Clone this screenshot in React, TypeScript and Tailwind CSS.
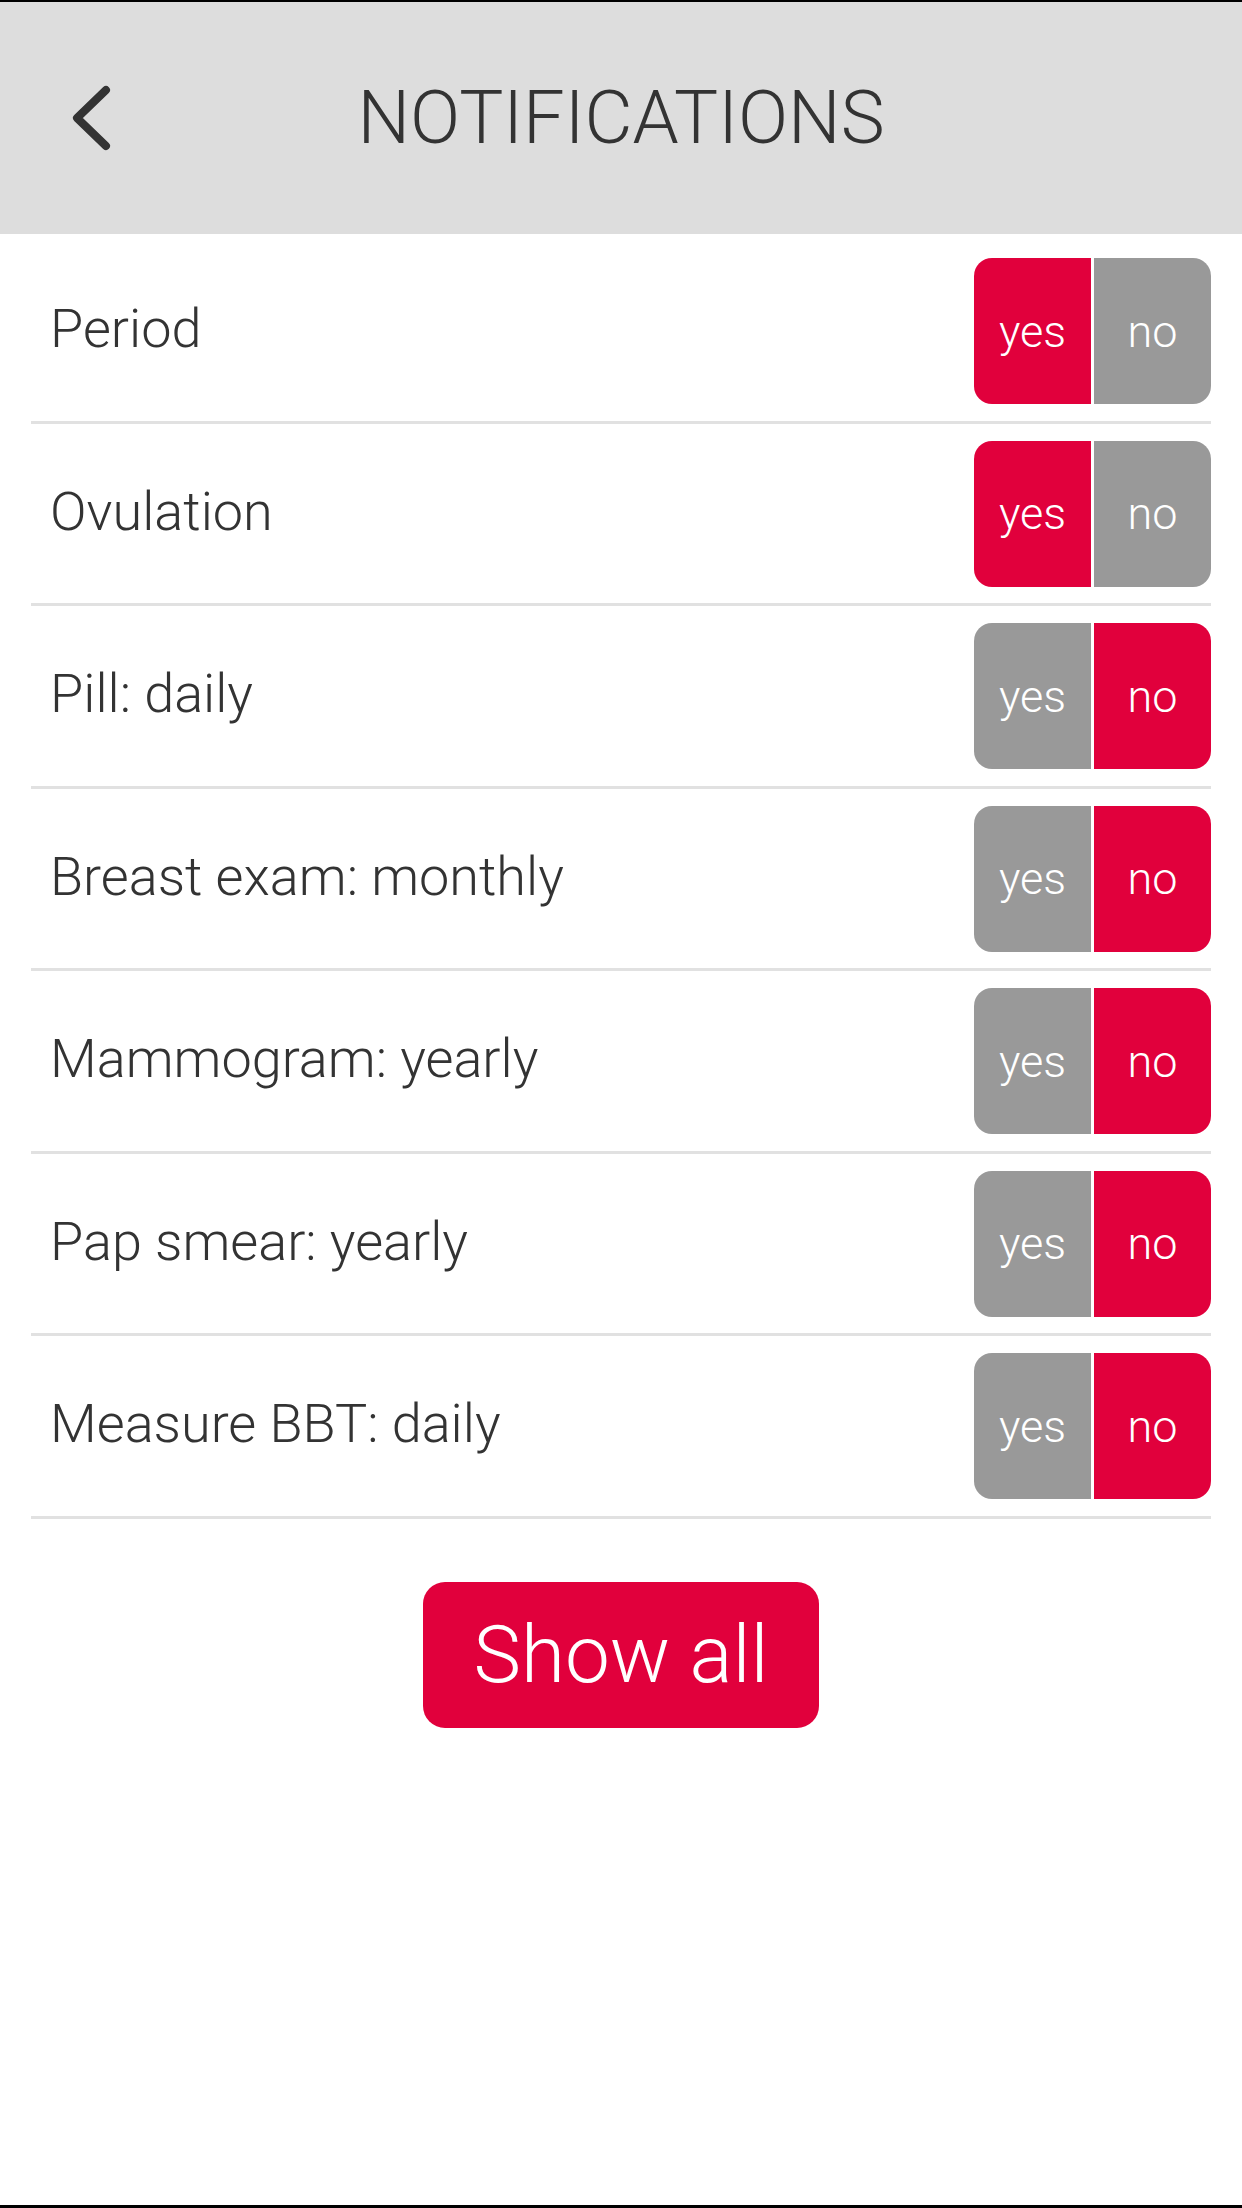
import React, { useState } from 'react';

type Choice = 'yes' | 'no';

interface Reminder {
  id: string;
  label: string;
  value: Choice;
}

const INITIAL: Reminder[] = [
  { id: 'period', label: 'Period', value: 'yes' },
  { id: 'ovulation', label: 'Ovulation', value: 'yes' },
  { id: 'pill', label: 'Pill: daily', value: 'no' },
  { id: 'breast', label: 'Breast exam: monthly', value: 'no' },
  { id: 'mammogram', label: 'Mammogram: yearly', value: 'no' },
  { id: 'pap', label: 'Pap smear: yearly', value: 'no' },
  { id: 'bbt', label: 'Measure BBT: daily', value: 'no' },
];

// ─── Yes / No switch ─────────────────────────────────────────────────────────

function YesNo({ value, onChange }: { value: Choice; onChange: (v: Choice) => void }) {
  const on = 'bg-[#e1003c]';
  const off = 'bg-[#999999]';
  return (
    <div className="flex h-[146px] w-[237px] shrink-0 gap-[3px]">
      <button
        type="button"
        onClick={() => onChange('yes')}
        className={`flex flex-1 items-center justify-center rounded-l-[18px] text-[45px] leading-none text-white ${
          value === 'yes' ? on : off
        }`}
      >
        yes
      </button>
      <button
        type="button"
        onClick={() => onChange('no')}
        className={`flex flex-1 items-center justify-center rounded-r-[18px] text-[45px] leading-none text-white ${
          value === 'no' ? on : off
        }`}
      >
        no
      </button>
    </div>
  );
}

// ─── Page ────────────────────────────────────────────────────────────────────

export default function App() {
  const [items, setItems] = useState<Reminder[]>(INITIAL);

  const setValue = (id: string, value: Choice) =>
    setItems((prev) => prev.map((it) => (it.id === id ? { ...it, value } : it)));

  return (
    <div className="flex h-[2208px] w-full flex-col border-t-2 border-b-[3px] border-black bg-white font-['Roboto','Liberation_Sans',sans-serif] font-light text-[#333333]">
      <header className="flex h-[232px] shrink-0 items-center bg-[#dddddd]">
        <div className="flex w-[160px] pl-[69px]">
          <button type="button" aria-label="Back">
            <svg width="45" height="72" viewBox="0 0 45 72" fill="none">
              <path
                d="M37 8 L8 36 L37 64"
                stroke="#333333"
                strokeWidth="8"
                strokeLinecap="round"
                strokeLinejoin="round"
              />
            </svg>
          </button>
        </div>
        <h1 className="flex-1 text-center text-[74px] leading-none">NOTIFICATIONS</h1>
        <div className="w-[160px]" />
      </header>

      <ul className="px-[31px] pt-[7px]">
        {items.map((it) => (
          <li
            key={it.id}
            className="flex items-center justify-between border-b-[3px] border-[#e1e1e1] pt-[17px] pb-[16.5px]"
          >
            <span className="mb-1 pl-[19px] text-[54px] leading-none">{it.label}</span>
            <YesNo value={it.value} onChange={(v) => setValue(it.id, v)} />
          </li>
        ))}
      </ul>

      <div className="flex justify-center pt-[63px]">
        <button
          type="button"
          className="flex h-[146px] w-[396px] items-center justify-center rounded-[22px] bg-[#e1003c] text-[80px] leading-none text-white"
        >
          Show all
        </button>
      </div>
    </div>
  );
}
